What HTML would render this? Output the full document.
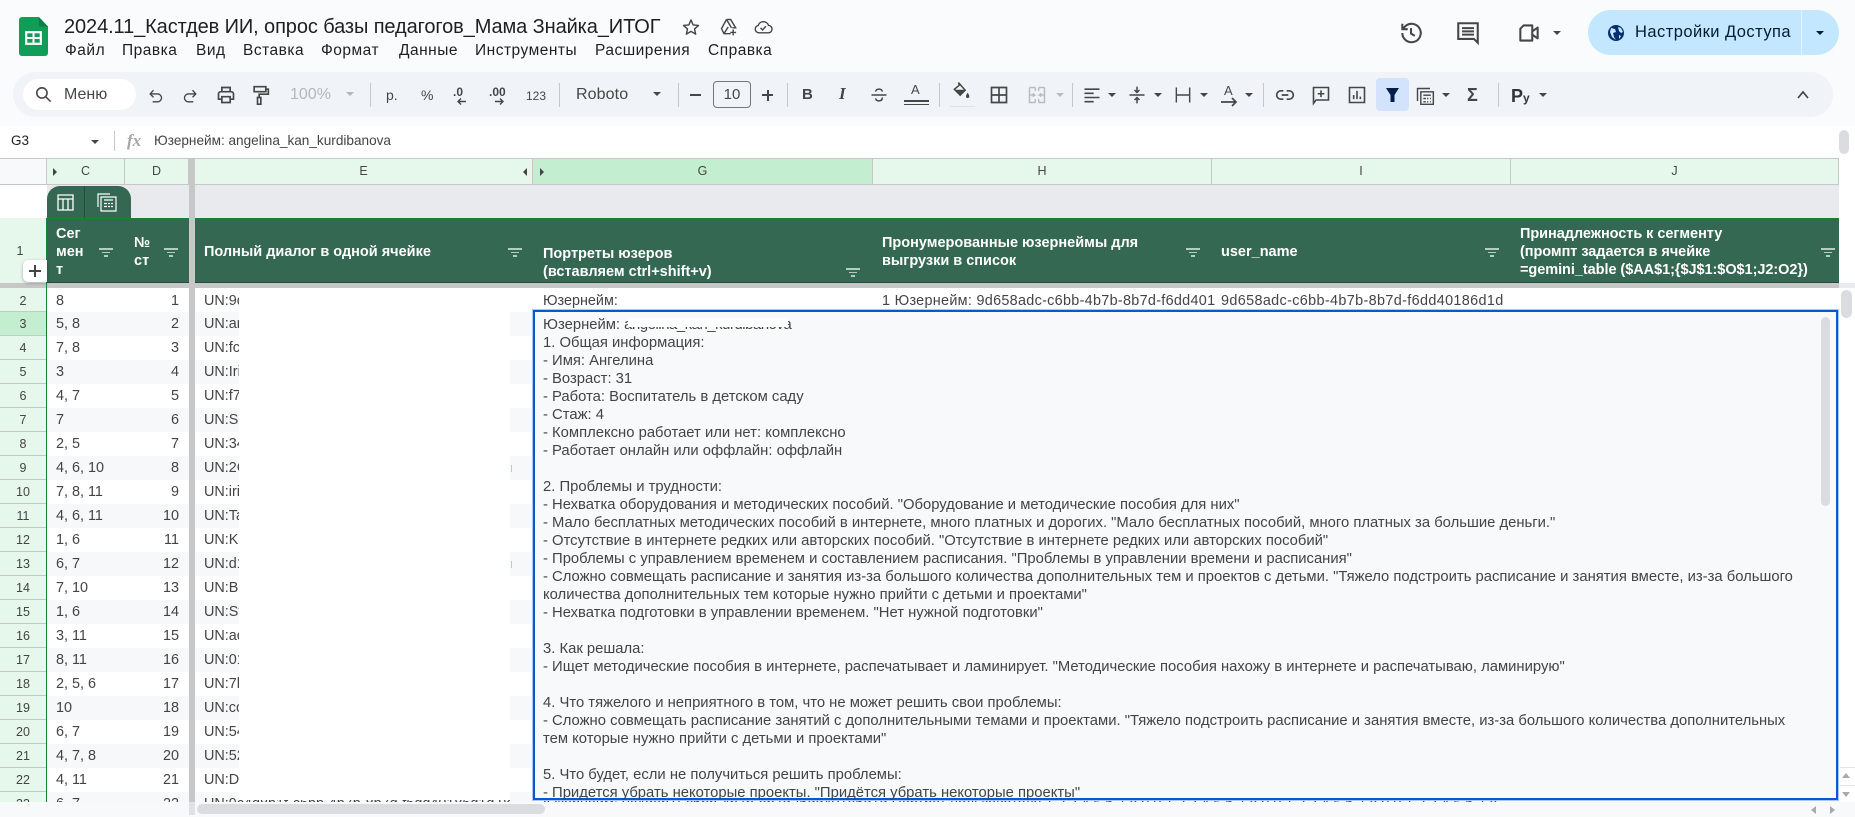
<!DOCTYPE html>
<html lang="ru"><head><meta charset="utf-8"><title>Таблица</title>
<style>
*{box-sizing:border-box}
html,body{margin:0;padding:0;width:1855px;height:817px;overflow:hidden;background:#f9fbfd;font-family:"Liberation Sans",sans-serif;color:#444746}
.a,.t,svg.i,.c,.s{position:absolute}
.t{white-space:nowrap}
svg.i{fill:none;stroke:#444746;stroke-width:1.6}
.c{width:0;height:0;border-left:4px solid transparent;border-right:4px solid transparent;border-top:4px solid #444746}
.s{width:1px;height:24px;top:83px;background:#c7c7c7}
.m{top:42px;font-size:15.500px;line-height:18px;color:#1f1f1f;letter-spacing:.5px}
.b{top:86px;font-size:13px;line-height:18px;color:#444746}
.ch{top:158px;height:27px;background:#e6f7ec;border-right:1px solid #c7c7c7;border-top:1px solid #c7c7c7;border-bottom:1px solid #c7c7c7;font-size:12.500px;line-height:25px;text-align:center;color:#444746}
.h{color:#fff;font-weight:bold;font-size:14.500px;line-height:18px;white-space:nowrap;position:absolute}
.f{position:absolute;width:14px;height:9px}
.f i{position:absolute;display:block;height:1.5px;background:#b5ccc2}
.f i:nth-child(1){left:0;width:14px;top:0}
.f i:nth-child(2){left:3px;width:8px;top:3.5px}
.f i:nth-child(3){left:5px;width:4px;top:7px}
.r{position:absolute;left:0;width:1839px;height:24px;font-size:14.400px;line-height:25px;color:#444}
.r.z:before{content:"";position:absolute;left:47px;top:0;width:1792px;height:24px;background:#f6f8f9}
.r b{font-weight:normal;position:absolute;left:0;top:0;width:46px;height:24px;background:#e6f7ec;border-bottom:1px solid #c7c7c7;text-align:center;font-size:12.500px}
.r u,.r s,.r em{text-decoration:none;font-style:normal;position:absolute;top:0;white-space:nowrap}
.r u{left:56px}
.r s{right:1660px;text-align:right}
.r em{left:204px}
#ed{left:533px;top:310px;width:1305px;height:490px;background:#f8f9fa;border:2px solid #0b57d0;outline:1px solid #a8c7fa}
#tx{position:absolute;left:543px;top:316px;font-size:14.300px;line-height:18px;color:#444;white-space:nowrap;transform:scaleX(1.036);transform-origin:0 0}
</style></head>
<body>

<!-- logo -->
<div class="a" style="left:19px;top:17px;width:29px;height:39px;background:#0f9d58;border-radius:3px"></div>
<div class="a" style="left:39px;top:17px;width:9px;height:9px;background:#f9fbfd"></div>
<svg class="a" style="left:38px;top:16px" width="11" height="11"><path d="M1 1l9 9.5H1z" fill="#0b8043"/></svg>
<svg class="a" style="left:25px;top:31px" width="17" height="14"><rect x="1.2" y="1.2" width="14.6" height="11.6" fill="none" stroke="#fff" stroke-width="2.2"/><path d="M8.5 1v12M1 7h15" stroke="#fff" stroke-width="2"/></svg>

<!-- title -->
<div class="t" style="left:64px;top:16px;font-size:20px;line-height:22px;color:#1f1f1f;letter-spacing:-.1px">2024.11_Кастдев ИИ, опрос базы педагогов_Мама Знайка_ИТОГ</div>
<svg class="i" style="left:681px;top:17px;stroke-width:1.7" width="20" height="20" viewBox="0 0 24 24"><path d="M12 3.5l2.6 6 6.4.6-4.8 4.2 1.4 6.3L12 17.3l-5.6 3.3 1.4-6.3L3 10.1l6.4-.6z" stroke-linejoin="round"/></svg>
<svg class="i" style="left:719px;top:17px;stroke-width:1.7" width="20" height="20" viewBox="0 0 24 24"><path d="M9 3h5l6 10h-4M9 3L3 14l3 6h8M9 3l6 10M6 20l5-8M17 15v7M13.500 18.500h7"/></svg>
<svg class="i" style="left:753px;top:17px;stroke-width:1.7" width="20" height="20" viewBox="0 0 24 24"><path d="M7 19a4.500 4.500 0 0 1-.7-8.900A6.500 6.500 0 0 1 18.600 10 4.500 4.500 0 0 1 18 19zM9 13l2.500 2.500L15.500 11"/></svg>

<!-- menu -->
<div class="t m" style="left:65px">Файл</div>
<div class="t m" style="left:122px">Правка</div>
<div class="t m" style="left:196px">Вид</div>
<div class="t m" style="left:243px">Вставка</div>
<div class="t m" style="left:321px">Формат</div>
<div class="t m" style="left:399px">Данные</div>
<div class="t m" style="left:475px">Инструменты</div>
<div class="t m" style="left:595px">Расширения</div>
<div class="t m" style="left:708px">Справка</div>

<!-- top right -->
<svg class="i" style="left:1398px;top:20px;stroke-width:1.9" width="26" height="26" viewBox="0 0 24 24"><path d="M4 12a8.500 8.500 0 1 0 2.600-6.100L4 8.500M4 3.500v5h5M12 7.500V12.500l3.500 2.200"/></svg>
<svg class="i" style="left:1455px;top:20px;stroke-width:1.9" width="26" height="26" viewBox="0 0 24 24"><path d="M3 3h18v18l-3.500-3.500H3zM6.500 7.500h11M6.500 10.500h11M6.500 13.500h11"/></svg>
<svg class="i" style="left:1516px;top:20px;stroke-width:1.9" width="26" height="26" viewBox="0 0 24 24"><path d="M7 5h8v14H4V8zM15 10.500l5-3.500v10l-5-3.500" stroke-linejoin="round"/></svg>
<div class="c" style="left:1553px;top:31px"></div>
<div class="a" style="left:1588px;top:10px;width:251px;height:45px;background:#c2e7ff;border-radius:23px"></div>
<div class="a" style="left:1801px;top:10px;width:1px;height:45px;background:#e4f4ff"></div>
<svg class="a" style="left:1607px;top:24px" width="18" height="18" viewBox="0 0 18 18"><circle cx="9" cy="9" r="8" fill="#062e6f"/><path d="M4 4l4 1 1 3-3 1 1 4 2 3-4-3-2-5zM11 3l3 1 2 4-2 1-2-2zM12 11l2 1-2 3z" fill="#c2e7ff"/></svg>
<div class="t" style="left:1635px;top:23px;font-size:16.500px;line-height:19px;color:#001d35;letter-spacing:.45px">Настройки Доступа</div>
<div class="c" style="left:1816px;top:31px;border-top-color:#001d35"></div>

<!-- toolbar -->
<div class="a" style="left:13px;top:72px;width:1820px;height:45px;background:#f0f4f9;border-radius:23px"></div>
<div class="a" style="left:23px;top:79px;width:113px;height:31px;background:#fff;border-radius:16px"></div>
<svg class="i" style="left:34px;top:85px;stroke-width:2" width="19" height="19" viewBox="0 0 24 24"><circle cx="10" cy="10" r="6.500"/><path d="M15 15l6 6"/></svg>
<div class="t b" style="left:64px;top:86px;font-size:16px;color:#444746">Меню</div>
<svg class="i" style="left:146px;top:86px" width="20" height="20" viewBox="0 0 24 24"><path d="M9 5L5 9.500l4 4M5 9.500h9.500a4.800 4.800 0 0 1 0 9.500H8"/></svg>
<svg class="i" style="left:180px;top:86px" width="20" height="20" viewBox="0 0 24 24"><path d="M15 5l4 4.500-4 4M19 9.500H9.500a4.800 4.800 0 0 0 0 9.500H16"/></svg>
<svg class="i" style="left:216px;top:85px;stroke-width:2" width="20" height="20" viewBox="0 0 24 24"><path d="M7 8V3h10v5M7 17H3v-6a3 3 0 0 1 3-3h12a3 3 0 0 1 3 3v6h-4M7 14h10v7H7z"/></svg>
<svg class="i" style="left:250px;top:84px;stroke-width:2" width="20" height="22" viewBox="0 0 24 24"><path d="M5 2h14v6H5zM19 5h3v6H11v4M9 15h4v8H9z"/></svg>
<div class="t b" style="left:290px;top:86px;font-size:16px;color:#b4b6b8">100%</div>
<div class="c" style="left:346px;top:92px;border-top-color:#b4b6b8"></div>
<div class="s" style="left:370px"></div>
<div class="t b" style="left:386px;top:86px;font-size:14px">р.</div>
<div class="t b" style="left:421px;top:86px;font-size:14px">%</div>
<div class="t b" style="left:453px;top:83px;font-weight:bold;font-size:12px">.0</div>
<svg class="i" style="left:456px;top:97px;stroke-width:1.400" width="11" height="9" viewBox="0 0 11 9"><path d="M10 4.500H2M5 1.500L2 4.500l3 3"/></svg>
<div class="t b" style="left:489px;top:83px;font-weight:bold;font-size:12px">.00</div>
<svg class="i" style="left:494px;top:97px;stroke-width:1.400" width="11" height="9" viewBox="0 0 11 9"><path d="M1 4.500h8M6 1.500l3 3-3 3"/></svg>
<div class="t b" style="left:526px;top:87px;font-size:12px">123</div>
<div class="s" style="left:559px"></div>
<div class="t b" style="left:576px;top:86px;font-size:16px;letter-spacing:.1px">Roboto</div>
<div class="c" style="left:653px;top:92px"></div>
<div class="s" style="left:678px"></div>
<div class="a" style="left:690px;top:94px;width:11px;height:1.500px;background:#444746"></div>
<div class="a" style="left:713px;top:81px;width:38px;height:27px;border:1px solid #747775;border-radius:4px;font-size:15px;line-height:26px;text-align:center;color:#444746">10</div>
<div class="a" style="left:762px;top:94px;width:11px;height:1.500px;background:#444746"></div>
<div class="a" style="left:767px;top:89.500px;width:1.500px;height:11px;background:#444746"></div>
<div class="s" style="left:787px"></div>
<div class="t b" style="left:802px;top:86px;font-weight:bold;font-size:15px">B</div>
<div class="t b" style="left:839px;top:85px;font-weight:bold;font-style:italic;font-size:17px;font-family:'Liberation Serif',serif">I</div>
<svg class="i" style="left:869px;top:85px;stroke-width:1.8" width="20" height="20" viewBox="0 0 24 24"><path d="M3 12h18M16 8c0-2-1.800-3-4-3s-4 1-4 3M16 15c0 3-1.800 4-4 4s-4-1-4-3"/></svg>
<div class="t b" style="left:911px;top:81px;font-size:13px">A</div>
<div class="a" style="left:904px;top:100px;width:25px;height:2px;background:#444746"></div>
<div class="a" style="left:904px;top:104px;width:25px;height:1px;background:#444746"></div>
<div class="s" style="left:939px"></div>
<svg class="i" style="left:951px;top:81px;stroke-width:1.800" width="20" height="20" viewBox="0 0 24 24"><path d="M9 2l8 9-6 6-7-7 6-5z" /><path d="M4.500 10.500h12l-5.500 6z" fill="#444746" stroke="none"/><path d="M20 14c-1 2-2 3-2 4.500a2 2 0 0 0 4 0C22 17 21 16 20 14z" fill="#444746" stroke="none"/></svg>
<div class="a" style="left:950px;top:106px;width:25px;height:1px;background:#dfe3e8"></div>
<svg class="i" style="left:989px;top:85px;stroke-width:2" width="20" height="20" viewBox="0 0 24 24"><path d="M3 3h18v18H3zM12 3v18M3 12h18"/></svg>
<svg class="i" style="left:1027px;top:85px;stroke:#b9bcbf;stroke-width:1.800" width="20" height="20" viewBox="0 0 24 24"><path d="M3 3h7M14 3h7M3 3v18h7M21 3v18h-7M10 3v4M14 3v4M10 17v4M14 17v4M3 12h6l-2-2M9 12l-2 2M21 12h-6l2-2M15 12l2 2"/></svg>
<div class="c" style="left:1056px;top:93px;border-top-color:#b9bcbf"></div>
<div class="s" style="left:1072px"></div>
<svg class="i" style="left:1082px;top:85px;stroke-width:1.900" width="20" height="20" viewBox="0 0 24 24"><path d="M3 4h18M3 9h11M3 14h18M3 19h11" transform="translate(0 1)"/></svg>
<div class="c" style="left:1108px;top:93px"></div>
<svg class="i" style="left:1127px;top:85px;stroke-width:1.800" width="20" height="20" viewBox="0 0 24 24"><path d="M3 12h18M12 2v7M9 6l3 3 3-3M12 22v-7M9 18l3-3 3 3"/></svg>
<div class="c" style="left:1154px;top:93px"></div>
<svg class="i" style="left:1173px;top:85px;stroke-width:1.700" width="20" height="20" viewBox="0 0 24 24"><path d="M4 3v18M20 3v18M4 12h16"/></svg>
<div class="c" style="left:1200px;top:93px"></div>
<div class="t b" style="left:1224px;top:82px;font-size:13px">A</div>
<svg class="i" style="left:1219px;top:97px;stroke-width:1.700" width="20" height="11" viewBox="0 0 20 11"><path d="M2 5h15M13 1l4 4-4 4"/></svg>
<div class="c" style="left:1245px;top:93px"></div>
<div class="s" style="left:1263px"></div>
<svg class="i" style="left:1275px;top:85px;stroke-width:2" width="20" height="20" viewBox="0 0 24 24"><path d="M10 7H7a5 5 0 0 0 0 10h3M14 7h3a5 5 0 0 1 0 10h-3M8 12h8"/></svg>
<svg class="i" style="left:1311px;top:84px;stroke-width:1.900" width="20" height="22" viewBox="0 0 24 24"><path d="M3 3h18v15H6l-3 4zM12 6.500v8M8 10.500h8"/></svg>
<svg class="i" style="left:1347px;top:85px;stroke-width:1.900" width="20" height="20" viewBox="0 0 24 24"><path d="M3 3h18v18H3zM8 17v-5M12 17V7M16 17v-3"/></svg>
<div class="a" style="left:1376px;top:78px;width:33px;height:33px;background:#d3e3fd;border-radius:4px"></div>
<svg class="a" style="left:1386px;top:87px" width="13" height="16" viewBox="0 0 13 16"><path d="M0 1h13L8.500 8v7h-4V8z" fill="#041e49"/></svg>
<svg class="i" style="left:1415px;top:86px;stroke-width:1.700" width="20" height="20" viewBox="0 0 24 24"><path d="M3 18V3h15M7 7h15v15H7zM10 11h9M10 15h3M14.500 15h1.500M18 15h1M10 19h3M14.500 19h1.500M18 19h1"/></svg>
<div class="c" style="left:1442px;top:93px"></div>
<div class="t b" style="left:1467px;top:86px;font-size:18px;font-weight:bold">Σ</div>
<div class="s" style="left:1498px"></div>
<div class="t b" style="left:1511px;top:87px;font-size:18px;font-weight:bold;color:#333">P<span style="font-size:12px">y</span></div>
<div class="c" style="left:1539px;top:93px"></div>
<svg class="i" style="left:1796px;top:89px;stroke-width:1.700" width="14" height="12" viewBox="0 0 14 12"><path d="M2 9l5-6 5 6"/></svg>

<!-- formula bar -->
<div class="a" style="left:0;top:126px;width:1855px;height:32px;background:#fff"></div>
<div class="t" style="left:11px;top:133px;font-size:13.500px;line-height:16px;color:#1f1f1f">G3</div>
<div class="c" style="left:91px;top:140px"></div>
<div class="a" style="left:114px;top:131px;width:1px;height:20px;background:#c7c7c7"></div>
<div class="t" style="left:127px;top:131px;font-family:'Liberation Serif',serif;font-style:italic;font-size:17px;line-height:20px;color:#a4a6a8;font-weight:bold">fx</div>
<div class="t" style="left:154px;top:133px;font-size:13.600px;line-height:16px;color:#444">Юзернейм: angelina_kan_kurdibanova</div>
<div class="a" style="left:1839px;top:130px;width:10px;height:24px;background:#dadce0;border-radius:5px"></div>

<!-- column headers -->
<div class="a" style="left:0;top:158px;width:1839px;height:1px;background:#c7c7c7"></div>
<div class="a" style="left:0;top:159px;width:47px;height:26px;background:#f8f9fa;border-bottom:1px solid #c7c7c7;border-right:1px solid #c7c7c7"></div>
<div class="a ch" style="left:47px;width:78px;padding-left:0">C</div>
<div class="a ch" style="left:125px;width:64px">D</div>
<div class="a ch" style="left:195px;width:338px">E</div>
<div class="a ch" style="left:533px;width:340px;background:#c4eed0">G</div>
<div class="a ch" style="left:873px;width:339px">H</div>
<div class="a ch" style="left:1212px;width:299px">I</div>
<div class="a ch" style="left:1511px;width:328px">J</div>
<svg class="a" style="left:52px;top:168px" width="5" height="8"><path d="M1 0l4 4-4 4z" fill="#444"/></svg>
<svg class="a" style="left:522px;top:168px" width="5" height="8"><path d="M5 0L1 4l4 4z" fill="#444"/></svg>
<svg class="a" style="left:539px;top:168px" width="5" height="8"><path d="M1 0l4 4-4 4z" fill="#444"/></svg>

<!-- grid base -->
<div class="a" style="left:47px;top:185px;width:142px;height:33px;background:#e8eaed"></div>
<div class="a" style="left:0;top:185px;width:47px;height:33px;background:#fff"></div>
<div class="a" style="left:195px;top:185px;width:1644px;height:33px;background:#e8eaed"></div>
<div class="a" style="left:47px;top:186px;width:84px;height:32px;background:#356853;border-radius:13px 13px 0 0"></div>
<div class="a" style="left:84px;top:186px;width:1px;height:32px;background:#234d3c"></div>
<svg class="a" style="left:57px;top:194px" width="17" height="17" viewBox="0 0 17 17" fill="none" stroke="#fff" stroke-width="1.300"><path d="M1 1h15v15H1zM1 5h15M6 5v11M11 5v11"/></svg>
<svg class="a" style="left:97px;top:193px" width="20" height="19" viewBox="0 0 20 19" fill="none" stroke="#fff" stroke-width="1.200"><path d="M1 14V1h12M4 4h15v14H4zM7 7h9M7 10.500h3M11 10.500h2M14 10.500h2M7 13.500h3M11 13.500h2M14 13.500h2"/></svg>

<!-- header row -->
<div class="a" style="left:0;top:218px;width:47px;height:65px;background:#e6f7ec"></div>
<div class="a" style="left:0;top:243px;width:40px;line-height:16px;text-align:center;font-size:12.500px;color:#444">1</div>
<div class="a" style="left:47px;top:218px;width:142px;height:65px;background:#356853;border-top:1px solid #188038;border-bottom:1px solid #234d3c"></div>
<div class="a" style="left:195px;top:218px;width:1644px;height:65px;background:#356853;border-top:1px solid #188038;border-bottom:1px solid #234d3c"></div>
<div class="h" style="left:56px;top:225px">Сег<br>мен<br>т</div>
<div class="h" style="left:134px;top:234px">№<br>ст</div>
<div class="h" style="left:204px;top:243px">Полный диалог в одной ячейке</div>
<div class="h" style="left:543px;top:245px">Портреты юзеров<br>(вставляем ctrl+shift+v)</div>
<div class="h" style="left:882px;top:234px">Пронумерованные юзернеймы для<br>выгрузки в список</div>
<div class="h" style="left:1221px;top:243px">user_name</div>
<div class="h" style="left:1520px;top:225px;letter-spacing:-.05px">Принадлежность к сегменту<br>(промпт задается в ячейке<br>=gemini_table ($AA$1;{$J$1:$O$1;J2:O2})</div>
<div class="f" style="left:99px;top:248px"><i></i><i></i><i></i></div>
<div class="f" style="left:164px;top:248px"><i></i><i></i><i></i></div>
<div class="f" style="left:508px;top:248px"><i></i><i></i><i></i></div>
<div class="f" style="left:846px;top:268px"><i></i><i></i><i></i></div>
<div class="f" style="left:1186px;top:248px"><i></i><i></i><i></i></div>
<div class="f" style="left:1485px;top:248px"><i></i><i></i><i></i></div>
<div class="f" style="left:1821px;top:248px"><i></i><i></i><i></i></div>

<!-- rows -->
<div class="a" style="left:0;top:288px;width:1839px;height:514px;overflow:hidden;background:#fff">
<div class="r" style="top:0;line-height:27px"><b>2</b><u>8</u><s>1</s><em>UN:9c</em></div>
<div class="r z" style="top:24px"><b style="background:#c4eed0">3</b><u>5, 8</u><s>2</s><em>UN:ar</em></div>
<div class="r" style="top:48px"><b>4</b><u>7, 8</u><s>3</s><em>UN:fc</em></div>
<div class="r z" style="top:72px"><b>5</b><u>3</u><s>4</s><em>UN:Iri</em></div>
<div class="r" style="top:96px"><b>6</b><u>4, 7</u><s>5</s><em>UN:f7</em></div>
<div class="r z" style="top:120px"><b>7</b><u>7</u><s>6</s><em>UN:Sl</em></div>
<div class="r" style="top:144px"><b>8</b><u>2, 5</u><s>7</s><em>UN:34</em></div>
<div class="r z" style="top:168px"><b>9</b><u>4, 6, 10</u><s>8</s><em>UN:2C</em></div>
<div class="r" style="top:192px"><b>10</b><u>7, 8, 11</u><s>9</s><em>UN:iri</em></div>
<div class="r z" style="top:216px"><b>11</b><u>4, 6, 11</u><s>10</s><em>UN:Ta</em></div>
<div class="r" style="top:240px"><b>12</b><u>1, 6</u><s>11</s><em>UN:Ka</em></div>
<div class="r z" style="top:264px"><b>13</b><u>6, 7</u><s>12</s><em>UN:d1</em></div>
<div class="r" style="top:288px"><b>14</b><u>7, 10</u><s>13</s><em>UN:B9</em></div>
<div class="r z" style="top:312px"><b>15</b><u>1, 6</u><s>14</s><em>UN:Sv</em></div>
<div class="r" style="top:336px"><b>16</b><u>3, 11</u><s>15</s><em>UN:ac</em></div>
<div class="r z" style="top:360px"><b>17</b><u>8, 11</u><s>16</s><em>UN:01</em></div>
<div class="r" style="top:384px"><b>18</b><u>2, 5, 6</u><s>17</s><em>UN:7l</em></div>
<div class="r z" style="top:408px"><b>19</b><u>10</u><s>18</s><em>UN:cc</em></div>
<div class="r" style="top:432px"><b>20</b><u>6, 7</u><s>19</s><em>UN:54</em></div>
<div class="r z" style="top:456px"><b>21</b><u>4, 7, 8</u><s>20</s><em>UN:52</em></div>
<div class="r" style="top:480px"><b>22</b><u>4, 11</u><s>21</s><em>UN:D</em></div>
<div class="r z" style="top:504px"><b>23</b><u>6, 7</u><s>22</s><em style="width:306px;overflow:hidden">UN:9c4d8b1f-c6bb-4b7b-8b7d-f6dd40186d1d 9d65</em><em style="left:543px;width:956px;overflow:hidden">Юзернейм: 9c4d8b1f-c6bb-4b7b-8b7d-f6dd40186d1d Портрет пользователя 1 2 3 4 5 6 7 8 9 0 1 2 3 4 5 6 7 8 9 0 1 2 3 4 5 6 7 8 9 0 1 2 3 4 5 6 7 8 9 0 1 2 3 4 5 6 7 8 9 0 1 2 3 4 5 6 7 8 9 0 1 2 3 4 5</em></div>
<!-- row-2 right columns -->
<div class="t" style="left:543px;top:0;font-size:14.400px;line-height:27px;color:#444">Юзернейм:</div>
<div class="t" style="left:882px;top:0;font-size:14.400px;line-height:27px;color:#444;letter-spacing:.3px;width:335px;overflow:hidden">1 Юзернейм: 9d658adc-c6bb-4b7b-8b7d-f6dd401</div>
<div class="t" style="left:1221px;top:0;font-size:14.400px;line-height:27px;color:#444;letter-spacing:.36px">9d658adc-c6bb-4b7b-8b7d-f6dd40186d1d</div>
<!-- mask -->
<div class="a" style="left:239px;top:0;width:271px;height:512px;background:#fff"></div>
</div>
<div class="a" style="left:511px;top:465px;width:1px;height:7px;background:#a8d0f5"></div>
<div class="a" style="left:511px;top:561px;width:1px;height:7px;background:#a8d0f5"></div>

<!-- freeze bars -->
<div class="a" style="left:189px;top:158px;width:6px;height:644px;background:#c7c7c7"></div>
<div class="a" style="left:0;top:283px;width:1839px;height:5px;background:#c7c7c7"></div>
<div class="a" style="left:46px;top:218px;width:1px;height:584px;background:#188038"></div>

<!-- plus button -->
<div class="a" style="left:23px;top:260px;width:24px;height:22px;background:#fff;border-radius:5px 0 0 5px;box-shadow:0 1px 3px rgba(0,0,0,.3)"></div>
<div class="a" style="left:29px;top:270px;width:12px;height:2px;background:#444"></div>
<div class="a" style="left:34px;top:265px;width:2px;height:12px;background:#444"></div>

<!-- editor -->
<div class="a" id="ed"></div>
<div id="tx">Юзернейм: <span style="letter-spacing:-.4px">angelina_kan_kurdibanova</span><br>1. Общая информация:<br>- Имя: Ангелина<br>- Возраст: 31<br>- Работа: Воспитатель в детском саду<br>- Стаж: 4<br>- Комплексно работает или нет: комплексно<br>- Работает онлайн или оффлайн: оффлайн<br><br>2. Проблемы и трудности:<br>- Нехватка оборудования и методических пособий. "Оборудование и методические пособия для них"<br>- Мало бесплатных методических пособий в интернете, много платных и дорогих. "Мало бесплатных пособий, много платных за большие деньги."<br>- Отсутствие в интернете редких или авторских пособий. "Отсутствие в интернете редких или авторских пособий"<br>- Проблемы с управлением временем и составлением расписания. "Проблемы в управлении времени и расписания"<br>- Сложно совмещать расписание и занятия из-за большого количества дополнительных тем и проектов с детьми. "Тяжело подстроить расписание и занятия вместе, из-за большого<br>количества дополнительных тем которые нужно прийти с детьми и проектами"<br>- Нехватка подготовки в управлении временем. "Нет нужной подготовки"<br><br>3. Как решала:<br>- Ищет методические пособия в интернете, распечатывает и ламинирует. "Методические пособия нахожу в интернете и распечатываю, ламинирую"<br><br>4. Что тяжелого и неприятного в том, что не может решить свои проблемы:<br>- Сложно совмещать расписание занятий с дополнительными темами и проектами. "Тяжело подстроить расписание и занятия вместе, из-за большого количества дополнительных<br>тем которые нужно прийти с детьми и проектами"<br><br>5. Что будет, если не получиться решить проблемы:<br>- Придется убрать некоторые проекты. "Придётся убрать некоторые проекты"</div>
<div class="a" style="left:628px;top:318px;width:160px;height:9px;background:#fff"></div>
<div class="a" style="left:1821px;top:317px;width:9px;height:189px;background:#dadce0;border-radius:5px"></div>

<!-- right scrollbar -->
<div class="a" style="left:1839px;top:158px;width:16px;height:659px;background:#fff"></div>
<div class="a" style="left:1839px;top:283px;width:16px;height:5px;background:#e8eaed"></div>
<div class="a" style="left:1841px;top:290px;width:11px;height:28px;background:#dadce0;border-radius:6px"></div>
<div class="a" style="left:1840px;top:767px;width:15px;height:1px;background:#e3e3e3"></div>
<div class="a" style="left:1840px;top:785px;width:15px;height:1px;background:#e3e3e3"></div>
<svg class="a" style="left:1842px;top:773px" width="8" height="5"><path d="M0 5l4-5 4 5z" fill="#aaa"/></svg>
<svg class="a" style="left:1842px;top:792px" width="8" height="5"><path d="M0 0l4 5 4-5z" fill="#aaa"/></svg>

<!-- bottom bar -->
<div class="a" style="left:0;top:802px;width:1855px;height:15px;background:#f8f9fa"></div>
<div class="a" style="left:189px;top:802px;width:6px;height:13px;background:#dfe1e4"></div>
<div class="a" style="left:197px;top:804px;width:348px;height:10px;background:#dadce0;border-radius:5px"></div>
<svg class="a" style="left:1811px;top:806px" width="5" height="8"><path d="M5 0L0 4l5 4z" fill="#aaa"/></svg>
<svg class="a" style="left:1830px;top:806px" width="5" height="8"><path d="M0 0l5 4-5 4z" fill="#aaa"/></svg>

</body></html>
